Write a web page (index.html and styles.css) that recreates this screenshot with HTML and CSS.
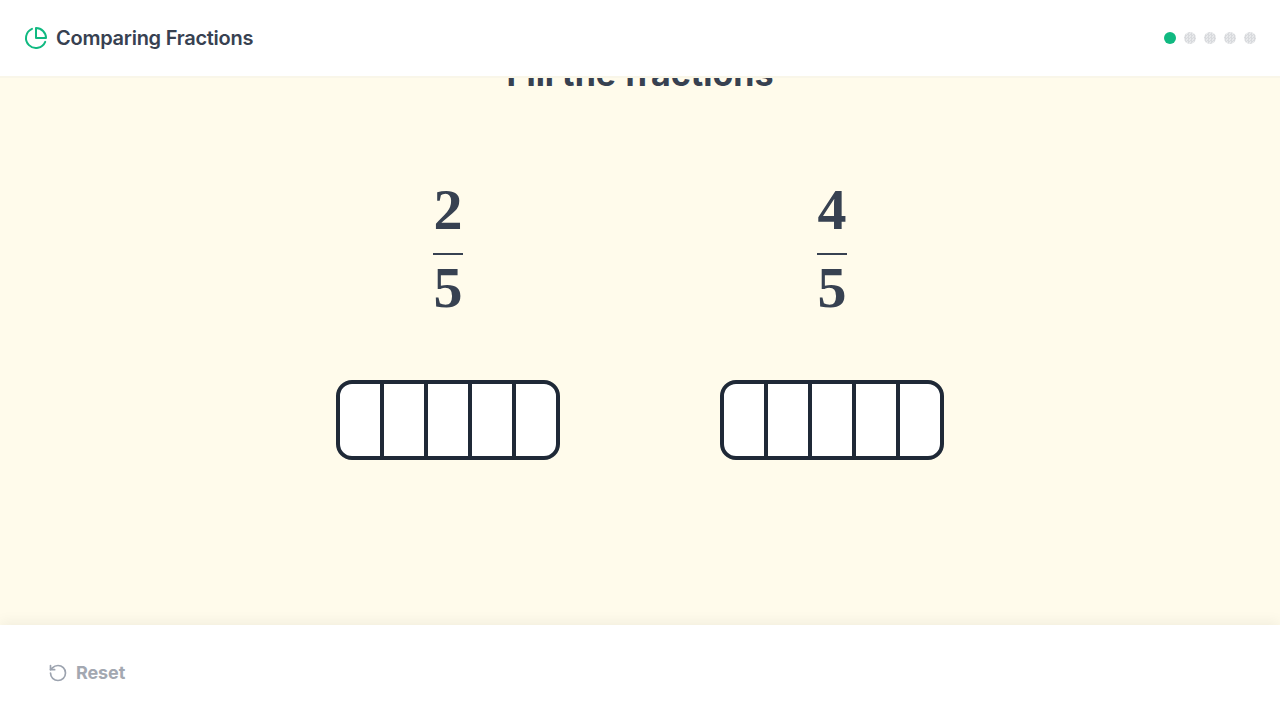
FILE: index.html
```html
<!DOCTYPE html>
<html lang="en">
<head>
<meta charset="utf-8">
<title>Comparing Fractions</title>
<link rel="stylesheet" href="styles.css">
</head>
<body>
<div class="app">
  <header class="topbar">
    <div class="brand">
      <svg class="brand-icon" viewBox="0 0 24 24" fill="none" stroke="#10b981" stroke-width="2" stroke-linecap="round" stroke-linejoin="round"><path d="M21.21 15.89A10 10 0 1 1 8 2.83"/><path d="M22 12A10 10 0 0 0 12 2v10z"/></svg>
      <span class="brand-name">Comparing Fractions</span>
    </div>
    <div class="progress">
      <span class="dot dot-on"></span>
      <span class="dot"></span>
      <span class="dot"></span>
      <span class="dot"></span>
      <span class="dot"></span>
    </div>
  </header>
  <main class="stage">
    <h1 class="title">Fill the fractions</h1>
    <div class="pair">
      <section class="item">
        <div class="fraction"><span class="num">2</span><span class="bar"></span><span class="num">5</span></div>
        <div class="cells"><i></i><i></i><i></i><i></i><i></i></div>
      </section>
      <section class="item">
        <div class="fraction"><span class="num">4</span><span class="bar"></span><span class="num">5</span></div>
        <div class="cells"><i></i><i></i><i></i><i></i><i></i></div>
      </section>
    </div>
  </main>
  <footer class="bottombar">
    <div class="reset">
      <svg class="reset-icon" viewBox="0 0 24 24" fill="none" stroke="#9ca3af" stroke-width="2" stroke-linecap="round" stroke-linejoin="round"><path d="M3 12a9 9 0 1 0 9-9 9.75 9.75 0 0 0-6.74 2.74L3 8"/><path d="M3 3v5h5"/></svg>
      <span>Reset</span>
    </div>
  </footer>
</div>
</body>
</html>
```
FILE: styles.css
```css
* { box-sizing: border-box; }
html, body { margin: 0; height: 100%; }
body { font-family: Inter, "Liberation Sans", sans-serif; background: #fff; overflow: hidden; }
.app { width: 1280px; height: 720px; display: flex; flex-direction: column; }

.topbar {
  position: relative; z-index: 2;
  height: 78px; flex: none;
  display: flex; align-items: center; justify-content: space-between;
  padding: 0 24px 1px;
  background: #fff;
  border-bottom: 2px solid #f9f6e9;
}
.brand { display: flex; align-items: center; gap: 8px; }
.brand-icon { width: 24px; height: 24px; display: block; }
.brand-name { font-size: 20px; line-height: 28px; font-weight: 600; color: #374151; letter-spacing: -0.26px; }

.progress { display: flex; align-items: center; gap: 8px; }
.dot {
  width: 12px; height: 12px; border-radius: 50%;
  background: repeating-conic-gradient(#d8dadd 0 25%, #e8e9eb 0 50%) 0 0 / 3px 3px;
}
.dot-on { background: #10b981; }

.stage {
  flex: 1; min-height: 0;
  background: #fffbeb;
  overflow: hidden;
}
.title {
  margin: -24px 0 0;
  font-size: 34px; line-height: 40px; font-weight: 700;
  color: #374151; text-align: center;
}
.pair { display: flex; justify-content: center; gap: 160px; margin-top: 85px; }
.item { display: flex; flex-direction: column; align-items: center; gap: 61px; }

.fraction { display: flex; flex-direction: column; align-items: center; color: #374151; }
.num {
  font-family: "Liberation Serif", serif; font-weight: 700;
  font-size: 58px; line-height: 62px;
}
.bar { width: 30px; height: 2px; background: #374151; margin: 12px 0 2px; }

.cells {
  width: 224px; height: 80px;
  display: flex;
  background: #fff;
  border: 4px solid #1f2937;
  border-radius: 16px;
  overflow: hidden;
}
.cells i { flex: 1; border-right: 4px solid #1f2937; }
.cells i:last-child { border-right: 0; }

.bottombar {
  position: relative; z-index: 2;
  height: 95px; flex: none;
  display: flex; align-items: center;
  padding: 0 48px;
  background: #fff;
  box-shadow: 0 -4px 12px rgba(0,0,0,0.05);
}
.reset { display: flex; align-items: center; gap: 8px; color: #a3a8b1; font-size: 18px; line-height: 28px; font-weight: 700; letter-spacing: -0.1px; }
.reset-icon { width: 20px; height: 20px; display: block; }
```
